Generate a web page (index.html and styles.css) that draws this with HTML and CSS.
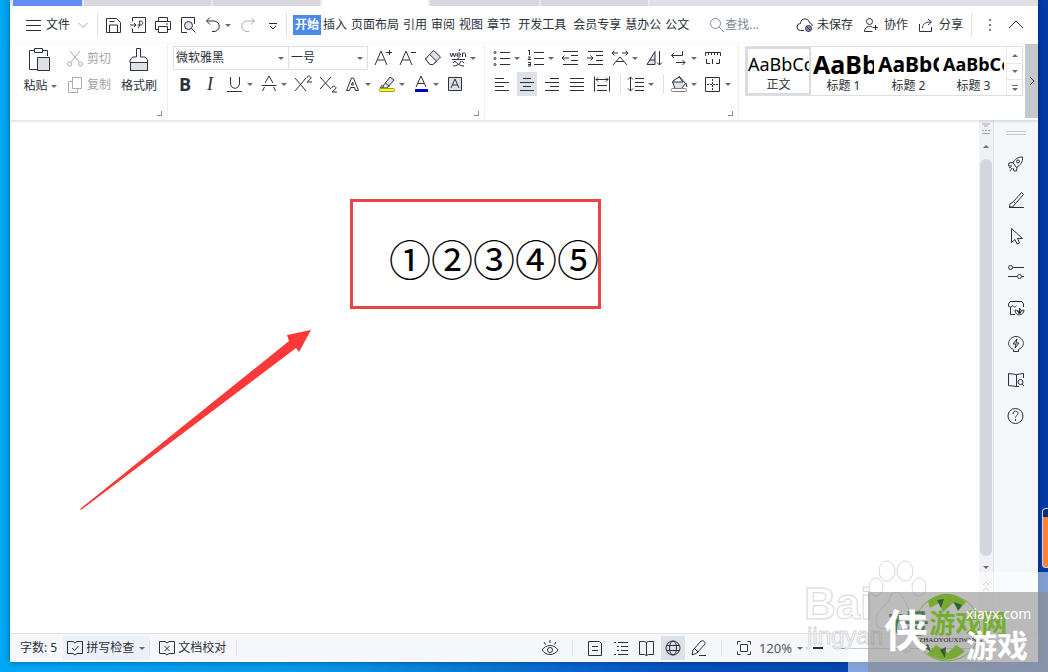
FILE: index.html
```html
<!DOCTYPE html>
<html lang="zh-CN">
<head>
<meta charset="utf-8">
<title>文字文档</title>
<link rel="stylesheet" href="styles.css">
</head>
<body>
<div class="desktop">
<div class="window">
  <div class="tabstrip"><span class="tab home"></span><span class="tab"></span><span class="tab"></span><span class="tab current"></span><span class="tab"></span><span class="tab"></span><span class="tab last"></span></div>

  <nav class="menubar">
    <button class="file"><svg width="16" height="16"><path d="M0 3.500h15M0 8.500h15M0 13.500h15"/></svg>文件<svg class="faint" width="10" height="16"><path d="M.5 6 5 10.500 9.500 6"/></svg></button>
    <span class="sep"></span>
    <div class="quick">
      <button aria-label="保存"><svg width="20" height="20"><path d="M3.500 17.500v-14h10l4 4v10zM6.500 17v-7h8v7M6.500 6.500h5"/></svg></button>
      <button aria-label="输出为PDF"><svg width="20" height="20"><path d="M4.500 6.500v-4h13v15h-13v-4M2 10h6M6 8l2 2-2 2M10 13c2-2 2-4 1.500-7h1c3 0 3 4 0 4h-3"/></svg></button>
      <button aria-label="打印"><svg width="20" height="20"><path d="M5.500 6.500v-4h9v4M5.500 14.500h-3v-8h15v8h-3M5.500 11.500h9v6h-9zM13 9h2"/></svg></button>
      <button aria-label="打印预览"><svg width="20" height="20"><path d="M9 17.500H3.500v-15h13V9"/><circle class="shade" cx="10.500" cy="10.500" r="4"/><path d="m13.500 13.500 4 4"/></svg></button>
      <button aria-label="撤销"><svg width="20" height="20"><path d="M7 2.500 3.500 6 7 9.500M3.500 6H11a4.800 4.800 0 0 1 0 10.500H9"/></svg></button>
      <i class="caret"></i>
      <button class="faint" aria-label="恢复"><svg width="20" height="20"><path d="m13 2.500 3.500 3.500L13 9.500M16.500 6H9a4.800 4.800 0 0 0 0 10.500h2"/></svg></button>
      <button aria-label="自定义"><svg width="20" height="20"><path d="M6 8.500h8M7 11l3 3 3-3"/></svg></button>
    </div>
    <span class="sep"></span>
    <div class="tabs">
      <button class="active">开始</button><button>插入</button><button>页面布局</button><button>引用</button><button>审阅</button><button>视图</button><button>章节</button><button class="wide">开发工具</button><button>会员专享</button><button>慧办公</button><button>公文</button>
    </div>
    <label class="search"><svg width="16" height="16"><circle cx="6.500" cy="6.500" r="5"/><path d="m10 10 5 5"/></svg><input type="text" placeholder="查找..." aria-label="查找"></label>
    <div class="account">
      <button><svg width="18" height="16"><path d="M8 13.500H4.500a3.500 3.500 0 0 1 0-7C4.500.5 13 .5 13.500 6c2 0 3 2 2.500 3"/><circle class="badge" cx="12.500" cy="11.500" r="3"/><path d="m11 10 3 3"/></svg>未保存</button>
      <button><svg width="18" height="16"><circle cx="6.500" cy="4.500" r="3"/><path d="M1.500 14.500c0-6 7-6 8-4M1.500 14.500h8M10 10.500h5M12.500 8v5"/></svg>协作</button>
      <button><svg width="18" height="16"><path d="M1.500 7v7.500h12V10M4.500 11c0-4 3-6 8-6M10 2l3.500 3L10 8"/></svg>分享</button>
      <span class="sep"></span>
      <button aria-label="更多"><svg class="dots" width="16" height="16"><path d="M8 2v2M8 7v2M8 12v2"/></svg></button>
      <button aria-label="收起功能区"><svg width="16" height="16"><path d="m1 11 7-7 7 7"/></svg></button>
    </div>
  </nav>

  <section class="ribbon">
    <div class="group clipboard">
      <button class="big"><svg width="26" height="26"><path d="M8 3.500H2.500v19H10M16 3.500h4.500V9M7.500 1.500h8v4h-8z"/><path class="shade" d="M10.500 10.500h12v13h-12z"/></svg><span>粘贴<i class="caret"></i></span></button>
      <div class="stack">
        <button class="faint"><svg width="16" height="18"><path d="M3 1 12 12M13 1 4 12"/><circle cx="2.500" cy="14" r="2"/><circle cx="13.500" cy="14" r="2"/></svg>剪切</button>
        <button class="faint"><svg width="16" height="18"><path d="M5.500 1.500h9v11h-9zM5 5.500H1.500v11h9V13"/></svg>复制</button>
      </div>
      <button class="big"><svg width="26" height="26"><path d="M10.500 10V1.500h4V10h4.500l2.500 3v2.500H4V13l2.500-3zM4.500 15v8.500h17V15"/><path class="shade" d="M4.500 15.500h17v8h-17z"/></svg><span>格式刷</span></button>
      <i class="corner"></i>
    </div>
    <div class="group font">
      <div class="row">
        <div class="combos">
          <span class="combo family"><select aria-label="字体"><option>微软雅黑</option></select><i class="caret"></i></span>
          <span class="combo size"><select aria-label="字号"><option>一号</option></select><i class="caret"></i></span>
        </div>
        <button aria-label="增大字号"><svg width="20" height="20"><path d="m2 17 6-14 6 14M4.500 12h7M13 4.500h6M16.500 2v5"/></svg></button>
        <button aria-label="减小字号"><svg width="20" height="20"><path d="m2 17 6-14 6 14M4.500 12h7M13 4.500h5"/></svg></button>
        <button aria-label="清除格式"><svg width="20" height="20"><path class="shade" d="m10.500 2.500 7 6.500-7.500 7.500H7L2.500 11z"/><path class="paper" d="m6.500 6.500 7 6.500-3.500 3.500H7L2.500 11z"/></svg></button>
        <button class="split" aria-label="拼音指南"><svg width="20" height="20"><path d="m2 5 1.500 4L5 5l1.500 4L8 5M9 7h3.500c0-3-3.500-3-3.500 0s2.500 2 3.500 1.500M12 1l-1 2M14.500 9V5M14.500 6c1-2 3-1 3 0v3M4 11.500h13M10 10v2M7 13l-2 2M14 13l2 2M7 13c2 3 5 5 9 5M13 13c-1 3-4 5-8 5"/></svg><i class="caret"></i></button>
      </div>
      <div class="row">
        <button class="b">B</button><button class="i">I</button>
        <button class="split" aria-label="下划线"><svg width="20" height="20"><path d="M5.500 3v6c0 7 9 7 9 0V3M2 17.500h15"/></svg><i class="caret"></i></button>
        <button class="split" aria-label="删除线"><svg width="20" height="20"><path d="m6 9 4-7 4 7M2.500 11.500h15M5.500 13l-2 4M14.500 13l2 4"/></svg><i class="caret"></i></button>
        <button aria-label="上标"><svg width="20" height="20"><path d="m2 4 11 13M13 4 2 17M14 4c0-3 4-2 4 0 0 1-4 4-4 4h5"/></svg></button>
        <button aria-label="下标"><svg width="20" height="20"><path d="m2 3 11 12M13 3 2 15M14 14c0-3 4-2 4 0 0 1-4 4-4 4h5"/></svg></button>
        <button class="split" aria-label="文字效果"><svg width="20" height="20"><path d="M3.500 16.500 8.500 4h2l5 12.500h-3l-1-3h-4l-1 3zM8.500 11h2l-1-3z"/></svg><i class="caret"></i></button>
        <button class="split" aria-label="突出显示"><svg width="20" height="20"><path class="shade" d="m6 12 7-9 4 3-7 8H6z"/><path d="m8.500 9 4 3.500M5.500 11 3 14h3"/><rect class="yellow" x="2.500" y="14.500" width="15" height="3" rx="1"/></svg><i class="caret"></i></button>
        <button class="split" aria-label="字体颜色"><svg width="20" height="20"><path d="m5 13 5-11 5 11M7 9.500h6"/><path class="blue" d="M4 16.500h13"/></svg><i class="caret"></i></button>
        <button aria-label="字符底纹"><svg width="20" height="20"><path class="shade" d="M3.500 3.500h13v13h-13z"/><path d="m6 14 4-9 4 9M7.500 11h5"/></svg></button>
      </div>
      <i class="corner"></i>
    </div>
    <div class="group para">
      <div class="row">
        <button class="split" aria-label="项目符号"><svg width="20" height="20"><path d="M8 4.500h10M8 10.500h10M8 16.500h10"/><circle cx="3" cy="4.500" r="1"/><circle cx="3" cy="10.500" r="1"/><circle cx="3" cy="16.500" r="1"/></svg><i class="caret"></i></button>
        <button class="split" aria-label="编号"><svg width="20" height="20"><path d="M8 4.500h10M8 10.500h10M8 16.500h10M2 3l1.500-1v5M2 9h2.500L2 11.500h3M2 14.500h2.500v3.500H2M2 16.500h2"/></svg><i class="caret"></i></button>
        <button aria-label="减少缩进"><svg width="20" height="20"><path d="M3 3.500h15M11 7.500h7M11 12.500h7M3 16.500h15M2 10h7M4.500 7.500 2 10l2.500 2.500"/></svg></button>
        <button aria-label="增加缩进"><svg width="20" height="20"><path d="M3 3.500h15M11 7.500h7M11 12.500h7M3 16.500h15M2 10h6M5.500 7.500 8 10l-2.500 2.500"/></svg></button>
        <button class="split" aria-label="中文版式"><svg width="20" height="20"><path d="m3 17 7-8 7 8M6 13.500h8M2 5h6M12 5h6M4.500 2.500 2 5l2.500 2.500M15.500 2.500 18 5l-2.500 2.500"/></svg><i class="caret"></i></button>
        <button aria-label="排序"><svg width="20" height="20"><path class="shade" d="m3 16.500 8-13v13zM6 12h5"/><path d="M15.500 3v14M13 14.500l2.500 2.500 2.500-2.500"/></svg></button>
        <button class="split" aria-label="换行"><svg width="20" height="20"><path d="M13.500 3v4.500h-11M5 5 2.500 7.500 5 10M7 14.500h9M13.500 12l2.500 2.500-2.500 2.500"/></svg><i class="caret"></i></button>
        <button aria-label="制表位"><svg width="20" height="20"><path d="M2.500 8V4.500h15V8M5.500 4v3M8.500 4v3M11.500 4v3M14.500 4v3M3.500 11v4.500H7M9.500 11v5M16.500 11v4.500H13"/></svg></button>
      </div>
      <div class="row">
        <button aria-label="左对齐"><svg width="20" height="20"><path d="M3 4.500h9M3 8.500h14M3 12.500h9M3 16.500h14"/></svg></button>
        <button class="on" aria-label="居中"><svg width="20" height="20"><path d="M6 4.500h8M3 8.500h14M6 12.500h8M3 16.500h14"/></svg></button>
        <button aria-label="右对齐"><svg width="20" height="20"><path d="M8 4.500h9M3 8.500h14M8 12.500h9M3 16.500h14"/></svg></button>
        <button aria-label="两端对齐"><svg width="20" height="20"><path d="M3 4.500h14M3 8.500h14M3 12.500h14M3 16.500h14"/></svg></button>
        <button aria-label="分散对齐"><svg width="20" height="20"><path d="M2.500 2.500v15M17.500 2.500v15M4 5.500h12M6 3.500 4 5.500l2 2M14 3.500l2 2-2 2M5 11.500h10M5 16.500h10"/></svg></button>
        <span class="sep"></span>
        <button class="split" aria-label="行距"><svg width="20" height="20"><path d="M9 4.500h9M9 8.500h9M9 12.500h9M9 16.500h9M4.500 3v14M2 5.500 4.500 3 7 5.500M2 14.500 4.500 17 7 14.500"/></svg><i class="caret"></i></button>
        <span class="sep"></span>
        <button class="split" aria-label="底纹颜色"><svg width="20" height="20"><path class="shade" d="m3.500 8 7-5.500 6 7-4 5H6z"/><path class="paper" d="m4 7 6-4 4 5H4z"/><path d="M17 9l1 4"/><rect class="paper rose" x="2.500" y="14.500" width="15" height="3" rx="1"/></svg><i class="caret"></i></button>
        <button class="split" aria-label="边框"><svg width="20" height="20"><path d="M2.500 3.500h14v14h-14z"/><path stroke-dasharray="2 1" d="M9.500 5v11M4 10.500h11"/></svg><i class="caret"></i></button>
      </div>
      <i class="corner"></i>
    </div>
    <div class="gallery">
      <button class="style chosen"><b class="s0">AaBbCc</b><span>正文</span></button>
      <button class="style"><b class="s1">AaBbCc</b><span>标题 1</span></button>
      <button class="style"><b class="s2">AaBbCc</b><span>标题 2</span></button>
      <button class="style"><b class="s3">AaBbCc</b><span>标题 3</span></button>
      <div class="spin"><button aria-label="上一行"><i class="caret up"></i></button><button aria-label="下一行"><i class="caret"></i></button><button class="more" aria-label="更多样式"><i class="caret"></i></button></div>
    </div>
    <button class="next" aria-label="向右滚动"><svg width="8" height="12"><path d="m2 2 4 4-4 4"/></svg></button>
  </section>

  <main class="work">
    <article class="page"><p>①②③④⑤</p>
      <div class="mark"></div>
      <svg class="arrow" width="232" height="182"><path d="M0 179 209 11 207 5 231 0 219 22 216 18 1 180z"/></svg>
    </article>
    <div class="scroll">
      <svg width="14" height="18"><path d="M3 4h8M5 6h4M3 10.500h2M6 10.500h2M9 10.500h2M3 13.500h8"/></svg>
      <i class="caret up"></i>
      <span class="thumb"></span>
      <i class="caret"></i>
      <svg width="14" height="60"><path d="m4 12 3-3 3 3M4 18l3-3 3 3"/></svg>
    </div>
    <aside class="side">
      <span class="grip"></span>
      <button aria-label="助手"><svg width="20" height="20"><path d="M7 9c2-4 5-6 9.500-6 .5 5-2 8-6 10.500zM7 8.500 3 9l-.5 3H6M11 13l-.5 4H8l-1-3M3 14l2-1M4 17l2-3"/><circle cx="12" cy="7.500" r="1.500"/></svg></button>
      <button aria-label="样式"><svg width="20" height="20"><path d="m7.500 11.500 8-9 2 2-8 9zM3 17.500h15M7.500 11.500 4 14l-.5 3h3l3-3.500"/></svg></button>
      <button aria-label="选择"><svg width="20" height="20"><path d="M5.500 2.500v14l3.500-3 2 4.500 2.500-1-2-4.500h5z"/></svg></button>
      <button aria-label="属性"><svg width="20" height="20"><path d="M7 5.500h11M2 14.500h9M16 14.500h2"/><circle cx="4.500" cy="5.500" r="2"/><circle cx="13.500" cy="14.500" r="2"/></svg></button>
      <button aria-label="素材"><svg width="20" height="20"><path d="M4.500 9v7.500H9M2.500 8.500V6L4 3.500h12L17.500 6v3M2.500 7.500c1 2 3 2 4 0 1 2 3 2 4 0M9 12c0 7 9 6 9 0-2 0-3 1-4 3-1-2-3-3-5-3zM13.500 16v-6l2 3-2 3-2-3z"/></svg></button>
      <button aria-label="推荐"><svg width="20" height="20"><path d="M7.500 15.500c-9-4-4-13 2.500-13s11.500 9 2.500 13v2h-5zM11 5l-4 5h3l-1 4 4-5h-3z"/></svg></button>
      <button aria-label="词典"><svg width="20" height="20"><path d="M10.500 4.500v12L2.500 15.500V3.500l8 1 7-1V8M10 16.500h3"/><circle cx="14.500" cy="12" r="2.500"/><path d="m16 14 2 2"/></svg></button>
      <button aria-label="帮助"><svg width="20" height="20"><circle cx="9.500" cy="10" r="7.500"/><path d="M7 8c0-4 5-3.500 5-.5 0 2-2.500 2-2.500 4M9.500 13v2"/></svg></button>
    </aside>
  </main>

  <footer class="status">
    <span class="count">字数: 5</span>
    <button class="spell"><svg width="16" height="16"><path d="M6 1.500H.5v12H6l2 1.500 2-1.500h5.500v-12H10L8 3 6 1.500M5 8l2.500 2.500L11.500 6"/></svg>拼写检查<i class="caret"></i></button>
    <span class="sep"></span>
    <button class="proof"><svg width="16" height="16"><path d="M6 1.500H.5v12H6l2 1.500 2-1.500h5.500v-12H10L8 3 6 1.500M5.500 6l5 5M10.500 6l-5 5"/></svg>文档校对</button>
    <span class="sep"></span>
    <div class="views">
      <button aria-label="护眼模式"><svg width="20" height="20"><path d="M2 12c4-6 12-6 16 0-4 6-12 6-16 0zM10 2v3M4 4l1.500 2.500M16 4l-1.500 2.500"/><circle cx="10" cy="12" r="2.500"/></svg></button>
      <span class="sep"></span>
      <button aria-label="页面视图"><svg width="20" height="20"><path d="M3.500 3.500h11l2 2v12h-13zM7 8.500h6M7 12.500h6"/></svg></button>
      <button aria-label="大纲"><svg width="20" height="20"><path d="M3 4.500h2M7 4.500h10M6 8.500h2M10 8.500h7M6 12.500h2M10 12.500h7M3 16.500h2M7 16.500h10"/></svg></button>
      <button aria-label="阅读版式"><svg width="20" height="20"><path d="M9.500 4.500v13l-2-1h-5v-13h5zl2-1h5v13h-5l-2 1"/></svg></button>
      <button class="on" aria-label="Web版式"><svg width="20" height="20"><circle cx="10" cy="10" r="7"/><ellipse cx="10" cy="10" rx="3.500" ry="7"/><path d="M3.500 7.500h13M3.500 12.500h13"/></svg></button>
      <button aria-label="写作模式"><svg width="20" height="20"><path d="m4 12 8-9c2-1 5 1 4 3l-8 9-5 2zM6 11l3 3M10 17.500h7"/></svg></button>
      <span class="sep"></span>
      <button aria-label="最佳显示比例"><svg width="20" height="20"><path d="M3.500 6.500v-3h3M13.500 3.500h3v3M16.500 13.500v3h-3M6.500 16.500h-3v-3M6.500 6.500h7v7h-7z"/></svg></button>
    </div>
    <button class="zoom">120%<i class="caret"></i></button>
    <button class="minus" aria-label="缩小"><svg width="12" height="4"><path d="M1 2h10"/></svg></button>
    <input class="slider" type="range" aria-label="显示比例">
  </footer>
</div>
<div class="widget"></div>

<div class="veil"></div>
<div class="stamp">
  <span class="bai">Bai</span><span class="jing">jingyan</span>
  <svg class="paw" width="64" height="74"><ellipse cx="19" cy="11" rx="8" ry="10"/><ellipse cx="37" cy="11" rx="8" ry="10"/><ellipse cx="8" cy="27" rx="7" ry="9"/><ellipse cx="51" cy="27" rx="7" ry="9"/><path d="M10 67c-8-15 10-19 13-32 8-7 12 1 17 13 14 11 4 29-8 21-8-4-15 3-22-2z"/></svg>
</div>
<div class="brand">
  <svg class="ring" width="72" height="72"><circle cx="37" cy="36" r="33"/><path d="M18 9Q37-6 56 10l-7 8-6-7-10 9-4-9-9 5zM17 62q22 13 38-3l-9-6-8 8-12-8z"/><path class="seed" d="m27 8 7-1-3 9zM44 10l8 3-4 6zM14 55l4-3 3 8zM30 58l6-3-1 11z"/></svg>
  <span class="name"><em>7号</em>游戏网</span>
  <span class="latin">ZHAOYOUXIWANG</span>
  <span class="xia">侠</span>
  <span class="url">xiayx.com</span>
  <span class="game">游戏</span>
</div>
</div>
</body>
</html>
```
FILE: styles.css
```css
* { box-sizing: border-box; }
body { margin: 0; font: 12px/16px "Noto Sans", "Noto Sans CJK SC", sans-serif; color: #2b2f3a; }
button, input, select { font: inherit; color: inherit; background: none; border: 0; padding: 0; margin: 0; }
button { display: flex; align-items: center; justify-content: center; white-space: nowrap; }
svg { fill: none; stroke: #2b303c; stroke-width: 1; flex: none; display: block; }
.shade { fill: #dfe2e8; }
.paper { fill: #fff; }
.rose { stroke: #927b7b; }
.yellow { fill: #ff0; stroke: #99993a; }
.blue { stroke: #00c; stroke-width: 3; }
.faint { color: #a0a3a9; stroke: #a8abb1; }
.faint svg { stroke: #a8abb1; }
.sep { width: 1px; height: 24px; background: #dfe1e5; flex: none; }
.caret { width: 0; height: 0; border: 3px solid transparent; border-top-color: #666b75; border-bottom: 0; flex: none; }
.caret.up { border: 3px solid transparent; border-bottom-color: #666b75; border-top: 0; }

.desktop { position: relative; height: 100vh; overflow: hidden; padding: 0 10px 10px; background: linear-gradient(90deg, #00a8f5 0, #0797e8 30%, #0751bd 65%, #053ba8 100%); }
.window { height: 100%; display: flex; flex-direction: column; background: #fff; box-shadow: 0 0 6px rgba(0, 20, 60, .5); }

.tabstrip { height: 6px; display: grid; grid-template-columns: 69px 127px 107px 106px 109px 107px 1fr; gap: 2px; padding-left: 3px; background: #e9e9ed; flex: none; }
.tab { background: #d7d7dd; }
.tab.home { background: #628cf6; }
.tab.current { background: #fff; }
.tab.last { background: #dfdfe4; }

.menubar { height: 38px; flex: none; display: flex; align-items: center; padding: 0 14px 0 16px; }
.file { gap: 4px; padding-right: 9px; }
.file .faint { margin-left: 4px; }
.quick { display: flex; align-items: center; gap: 5px; padding: 0 3px 0 5px; }
.quick .caret { margin: 0 2px 0 -3px; }
.tabs { display: flex; margin-left: 6px; }
.tabs button { height: 20px; padding: 0 2px; }
.tabs .wide { margin: 0 3px 0 3px; }
.tabs .active { background: #4b8aea; color: #fff; font-weight: 700; }
.search { display: flex; align-items: center; margin-left: 18px; color: #7d8493; flex: 1; }
.search svg { stroke: #7d8da3; }
.search input { width: 48px; outline: 0; }
.search input::placeholder { color: #7d8493; opacity: 1; }
.account { display: flex; align-items: center; gap: 10px; }
.account button { gap: 3px; }
.account .sep { margin-left: -2px; }
.badge { fill: #8791a8; }
.dots { stroke-width: 2; stroke: #777c86; }

.ribbon { height: 76px; flex: none; display: flex; position: relative; z-index: 1; box-shadow: 0 1px 3px rgba(0, 0, 0, .16); padding-bottom: 2px; background: #fff; }
.group { position: relative; border-right: 1px solid #eef0f3; display: flex; flex: none; }
.corner { position: absolute; right: 5px; bottom: 2px; width: 5px; height: 5px; border: solid #868b94; border-width: 0 1px 1px 0; }
.clipboard { width: 158px; padding-left: 12px; align-items: flex-start; }
.big { flex-direction: column; width: 36px; padding-top: 3px; gap: 5px; }
.big span { display: flex; align-items: center; gap: 3px; }
.stack { display: flex; flex-direction: column; align-items: flex-start; width: 63px; padding: 6px 0 0 9px; gap: 8px; }
.stack button { gap: 4px; height: 18px; }
.font { width: 317px; flex-direction: column; padding: 2px 0 0 5px; gap: 2px; }
.para { width: 254px; flex-direction: column; padding: 2px 0 0 7px; gap: 2px; }
.row { display: flex; align-items: center; gap: 5px; height: 24px; }
.row button { width: 20px; height: 24px; flex: none; }
.row .split { width: 29px; justify-content: flex-start; gap: 2px; }
.row .on, .views .on { background: #dce1e7; }
.row .sep { margin-left: 3px; height: 20px; }
.font .row:nth-child(2) { padding-left: 2px; }
.b { font: bold 18px/24px "Open Sans", sans-serif; }
.i { font: italic 18px/24px "Liberation Serif", serif; }
.combos { display: flex; width: 195px; border: 1px solid #dcdfe4; }
.combo { display: flex; align-items: center; height: 22px; padding-right: 4px; }
.combo select { flex: 1; min-width: 0; appearance: none; padding-left: 2px; outline: 0; }
.family { width: 115px; border-right: 1px solid #dcdfe4; }
.size { width: 78px; }

.gallery { display: grid; grid-template-columns: repeat(4, 65px) 1fr; width: 278px; height: 50px; margin: 2px 0 0 6px; border: 1px solid #dcdfe4; overflow: hidden; flex: none; }
.style { flex-direction: column; padding: 0 2px; overflow: hidden; min-width: 0; }
.style b { width: 100%; overflow: hidden; text-align: left; height: 29px; line-height: 30px; font-weight: 700; color: #000; }
.style.chosen { border: 2px solid #d9dbe2; padding: 0; }
.style .s0 { font-size: 18px; font-weight: 400; }
.style .s1 { font-size: 25px; }
.style .s2 { font-size: 21px; }
.style .s3 { font-size: 18px; }
.spin { display: grid; grid-template-rows: repeat(3, 1fr); border-left: 1px solid #e7e9ed; }
.spin button + button { border-top: 1px solid #e7e9ed; }
.spin .more { flex-direction: column; gap: 2px; }
.spin .more::before { content: ""; width: 6px; height: 1px; background: #666b75; }
.next { width: 13px; margin-left: auto; background: #c5c7cf; }

.work { flex: 1; min-height: 0; display: flex; }
.page { flex: 1; position: relative; }
.page p { margin: 108px 0 0 379px; font: 42px/60px "Noto Sans CJK SC", sans-serif; color: #000; }
.mark { position: absolute; left: 340px; top: 79px; width: 251px; height: 110px; border: 3px solid #e64545; }
.arrow { position: absolute; left: 70px; top: 210px; fill: #fc3838; stroke: none; }
.scroll { width: 15px; display: flex; flex-direction: column; align-items: center; background: #f0f1f6; border-right: 1px solid #dfe1e8; }
.scroll svg { stroke: #a5a8b4; }
.scroll .up { margin: 7px 0 11px; }
.scroll .thumb { flex: 1; width: 12px; border-radius: 6px; background: #d4d6df; }
.scroll .thumb + .caret { margin: 10px 0 4px; }
.side { width: 44px; background: #f4f7f9; display: flex; flex-direction: column; align-items: center; gap: 16px; padding-top: 11px; }
.side button { width: 20px; height: 20px; }
.grip { width: 20px; height: 4px; border: solid #c5c9ce; border-width: 1px 0; margin-bottom: 3px; }

.status { height: 29px; flex: none; display: flex; align-items: center; background: #f5f7fa; border-top: 1px solid #dfe2e6; padding-left: 10px; }
.status .sep { height: 16px; }
.spell { margin-left: 6px; height: 24px; padding: 0 4px; gap: 3px; background: #ecf1f9; }
.spell .caret { margin-left: 2px; }
.proof { gap: 3px; padding: 0 10px 0 9px; }
.views { display: flex; align-items: center; gap: 2px; margin-left: auto; }
.views button { width: 24px; height: 24px; }
.views .sep { margin: 0 8px; }
.zoom { gap: 5px; margin-left: 3px; font-size: 13px; color: #505562; }
.minus { margin-left: 9px; }
.minus svg { stroke-width: 2; }
.slider { appearance: none; width: 145px; height: 1px; background: #8c9099; margin: 0 59px 0 10px; }
.slider::-webkit-slider-thumb { appearance: none; width: 9px; height: 9px; border: 1px solid #9a9da5; border-radius: 50%; background: #ddd; }

.widget { position: absolute; right: 0; top: 508px; width: 6px; height: 60px; border: 1px solid #c9d8f5; border-right: 0; border-radius: 4px 0 0 4px; background: linear-gradient(#0b2c70 8px, #fb8332 8px); }
.veil { position: absolute; right: 0; bottom: 0; width: 200px; height: 100px; background: rgba(255, 255, 255, .5); }
.stamp { position: absolute; left: 804px; top: 560px; width: 190px; height: 90px; color: rgba(255, 255, 255, .8); -webkit-text-stroke: 1px #d6d7da; }
.stamp span { position: absolute; left: 0; }
.bai { top: 20px; font: bold 44px/48px "Liberation Sans", sans-serif; }
.stamp .jing { left: 3px; top: 62px; font: 24px/28px "Liberation Sans", sans-serif; }
.paw { position: absolute; left: 64px; top: 0; fill: rgba(255, 255, 255, .8); stroke: #d6d7da; }
.brand { position: absolute; right: 0; bottom: 0; width: 180px; height: 80px; background: rgba(140, 140, 140, .58); }
.brand > * { position: absolute; white-space: nowrap; }
.ring { left: 42px; top: 0; fill: #78a934; stroke: none; }
.ring circle { fill: none; stroke: #7fa94a; }
.ring .seed { fill: #315f35; }
.name { left: 20px; top: 12px; font: bold 26px/36px "Noto Sans CJK SC", sans-serif; color: #74ae2c; }
.name em { font-style: normal; color: #4a7954; }
.latin { left: 51px; top: 43px; font: 7px/10px "Liberation Serif", serif; color: #222; }
.xia { left: 16px; top: 12px; font: bold 44px/48px "Noto Sans CJK SC", sans-serif; color: #fff; }
.url { left: 98px; top: 12px; font-size: 14px; line-height: 20px; color: #fff; }
.game { left: 98px; top: 32px; font: bold 31px/40px "Noto Sans CJK SC", sans-serif; color: #fff; }
```
